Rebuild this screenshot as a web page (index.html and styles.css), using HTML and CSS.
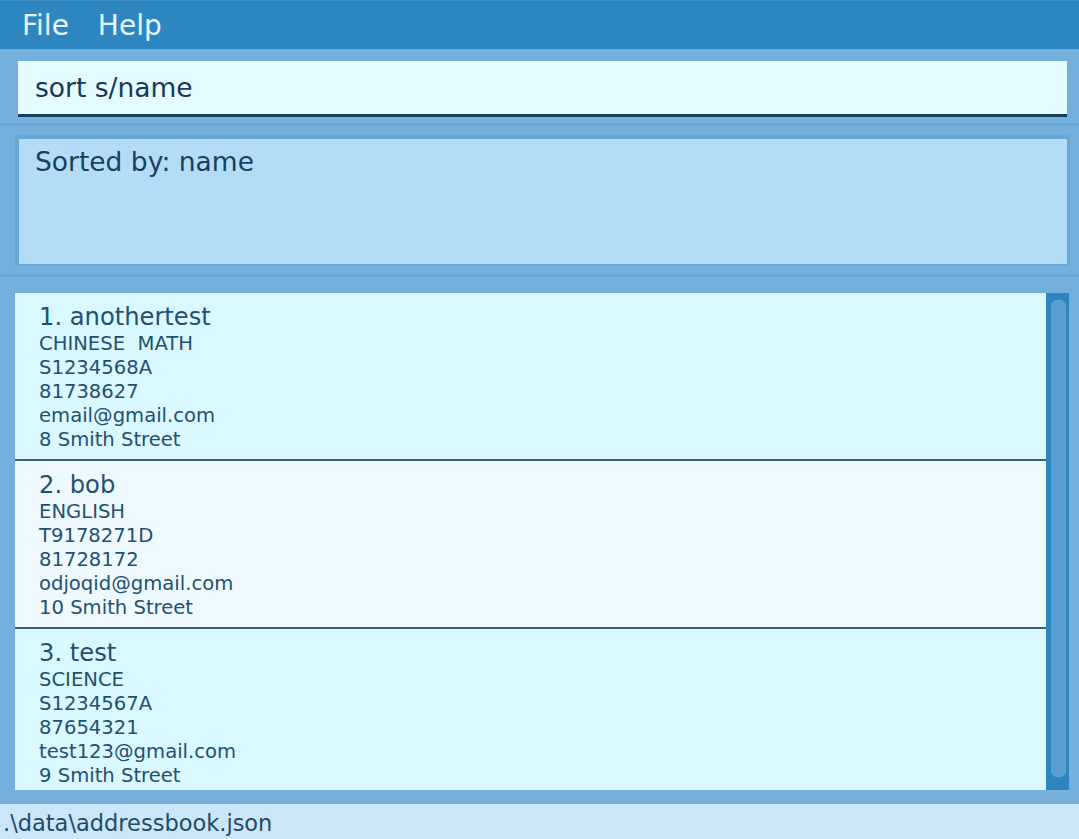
FILE: index.html
```
<!DOCTYPE html>
<html>
<head>
<meta charset="utf-8">
<link rel="stylesheet" href="styles.css">
</head>
<body>
<div class="app">
  <div class="menubar">
    <span class="menu-item">File</span>
    <span class="menu-item">Help</span>
  </div>
  <div class="command-pane">
    <div class="command-box">sort s/name</div>
  </div>
  <div class="divider"></div>
  <div class="result-pane">
    <div class="result-box">Sorted by: name</div>
  </div>
  <div class="divider"></div>
  <div class="list-pane">
    <div class="list">
      <div class="cards">
        <div class="card odd">
          <div class="name">1. anothertest</div>
          <div class="line">CHINESE&nbsp;&nbsp;MATH</div>
          <div class="line">S1234568A</div>
          <div class="line">81738627</div>
          <div class="line">email@gmail.com</div>
          <div class="line">8 Smith Street</div>
        </div>
        <div class="card even">
          <div class="name">2. bob</div>
          <div class="line">ENGLISH</div>
          <div class="line">T9178271D</div>
          <div class="line">81728172</div>
          <div class="line">odjoqid@gmail.com</div>
          <div class="line">10 Smith Street</div>
        </div>
        <div class="card odd">
          <div class="name">3. test</div>
          <div class="line">SCIENCE</div>
          <div class="line">S1234567A</div>
          <div class="line">87654321</div>
          <div class="line">test123@gmail.com</div>
          <div class="line">9 Smith Street</div>
        </div>
      </div>
      <div class="scrollbar"><div class="thumb"></div></div>
    </div>
  </div>
  <div class="statusbar">.\data\addressbook.json</div>
</div>
</body>
</html>
```
FILE: styles.css
```
html, body {
  margin: 0;
  padding: 0;
}
body {
  font-family: "DejaVu Sans", Verdana, sans-serif;
  background: #74b0db;
  overflow: hidden;
}
.app {
  display: flex;
  flex-direction: column;
  height: 839px;
  width: 1079px;
}
.menubar {
  flex-shrink: 0;
  height: 49px;
  background: #2e86c1;
  border-top: 1px solid #3b8fc8;
  box-sizing: border-box;
  display: flex;
  align-items: flex-start;
  gap: 29px;
  padding: 3px 0 0 22px;
}
.menu-item {
  color: #e9f5fd;
  font-size: 28px;
  line-height: 44px;
}
.command-pane {
  flex-shrink: 0;
  padding: 12px 12px 6px 18px;
}
.command-box {
  height: 53px;
  background: #e4fbff;
  border-bottom: 3px solid #11415f;
  color: #133a56;
  font-size: 26.5px;
  line-height: 53px;
  padding-left: 17px;
}
.divider {
  flex-shrink: 0;
  height: 3px;
  background: #68a7d4;
}
.result-pane {
  flex-shrink: 0;
  padding: 9px 9px 8px 15px;
}
.result-box {
  background: #b3ddf6;
  border-style: solid;
  border-color: #68a8d6;
  border-width: 4px 3px 2px 4px;
  color: #1b3f5e;
  font-size: 26.5px;
  line-height: 30px;
  padding: 8px 0 0 16px;
  box-sizing: content-box;
  height: 117px;
}
.list-pane {
  flex: 1;
  min-height: 0;
  padding: 16px 10px 14px 15px;
  display: flex;
  flex-direction: column;
}
.list {
  flex: 1;
  min-height: 0;
  display: flex;
  overflow: hidden;
}
.cards {
  flex: 1;
  overflow: hidden;
}
.card {
  padding: 9px 0 7px 24px;
  border-bottom: 2px solid #3d6079;
  color: #24506f;
}
.card.odd {
  background: #d9f8ff;
}
.card.even {
  background: #eefaff;
}
.name {
  font-size: 24.2px;
  line-height: 30px;
}
.line {
  font-size: 19.6px;
  line-height: 24px;
}
.scrollbar {
  width: 23px;
  background: #2e86c1;
  padding: 7px 3px 13px 5px;
  box-sizing: border-box;
  display: flex;
}
.thumb {
  flex: 1;
  background: #599fd2;
  border-radius: 6px;
  border: 1px solid #5da4d6;
}
.statusbar {
  flex-shrink: 0;
  height: 35px;
  box-sizing: border-box;
  background: #cce6f8;
  color: #1f4b6b;
  font-size: 22.5px;
  line-height: 31px;
  padding: 4px 0 0 3px;
  overflow: hidden;
  white-space: nowrap;
}
```
